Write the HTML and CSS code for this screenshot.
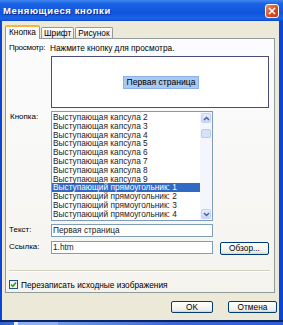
FILE: index.html
```html
<!doctype html>
<html lang="ru">
  <head>
    <meta charset="UTF-8" />
    <meta name="viewport" content="width=device-width, initial-scale=1.0" />
    <title>Меняющиеся кнопки</title>
    <link rel="stylesheet" href="styles.css">
  </head>
  <body>
    <div class="window">
      <div class="titlebar">
        <span class="title">Меняющиеся кнопки</span>
        <span class="close">
          <svg width="8" height="8" viewBox="0 0 8 8"><path d="M1 1L7 7M7 1L1 7" stroke="#fff" stroke-width="1.6" /></svg>
        </span>
      </div>

      <div class="client">
        <div class="tabs">
          <div class="tab active">Кнопка</div>
          <div class="tab">Шрифт</div>
          <div class="tab">Рисунок</div>
        </div>

        <div class="panel">
          <div class="row hint-row">
            <span class="label">Просмотр:</span>
            <span class="hint">Нажмите кнопку для просмотра.</span>
          </div>

          <div class="preview">
            <span class="preview-btn">Первая страница</span>
          </div>

          <div class="row list-row">
            <span class="label">Кнопка:</span>
            <div class="listbox">
              <ul class="items">
                <li>Выступающая капсула 2</li>
                <li>Выступающая капсула 3</li>
                <li>Выступающая капсула 4</li>
                <li>Выступающая капсула 5</li>
                <li>Выступающая капсула 6</li>
                <li>Выступающая капсула 7</li>
                <li>Выступающая капсула 8</li>
                <li>Выступающая капсула 9</li>
                <li class="selected">Выступающий прямоугольник: 1</li>
                <li>Выступающий прямоугольник: 2</li>
                <li>Выступающий прямоугольник: 3</li>
                <li>Выступающий прямоугольник: 4</li>
              </ul>
              <div class="scrollbar">
                <span class="sb-btn">
                  <svg width="7" height="5" viewBox="0 0 7 5"><path d="M1 4L3.5 1.5L6 4" fill="none" stroke="#4d6185" stroke-width="1.4" /></svg>
                </span>
                <span class="sb-thumb"></span>
                <span class="sb-track"></span>
                <span class="sb-btn">
                  <svg width="7" height="5" viewBox="0 0 7 5"><path d="M1 1L3.5 3.5L6 1" fill="none" stroke="#4d6185" stroke-width="1.4" /></svg>
                </span>
              </div>
            </div>
          </div>

          <div class="row field-row">
            <span class="label">Текст:</span>
            <div class="field">Первая страница</div>
          </div>

          <div class="row field-row link-row">
            <span class="label">Ссылка:</span>
            <div class="field">1.htm</div>
            <span class="xp-btn browse">Обзор...</span>
          </div>

          <div class="separator"></div>

          <div class="row check-row">
            <span class="checkbox">
              <svg width="7" height="7" viewBox="0 0 7 7"><path d="M1 3.5L2.8 5.3L6 1.5" fill="none" stroke="#21a121" stroke-width="1.5" /></svg>
            </span>
            <span>Перезаписать исходные изображения</span>
          </div>
        </div>

        <div class="actions">
          <span class="xp-btn ok">OK</span>
          <span class="xp-btn cancel">Отмена</span>
        </div>
      </div>

      <div class="taskbar">
        <span class="tb-mark"></span>
        <span class="tb-glow"></span>
      </div>
    </div>
  </body>
</html>
```

FILE: styles.css
```css
body {
  margin: 0;
  width: 283px;
  height: 325px;
  overflow: hidden;
  background: #0b3fc9;
  font-family: "Liberation Sans", Arial, sans-serif;
  font-size: 8.3px;
  color: #000;
}

.window {
  display: flex;
  flex-direction: column;
  height: 325px;
  background: #0a45d6;
}

.titlebar {
  height: 21px;
  flex: none;
  display: flex;
  align-items: center;
  justify-content: space-between;
  padding: 0 4px 0 3px;
  background: linear-gradient(#3f86f2 0%, #1a62e4 18%, #0f55dc 60%, #1b63e6 90%, #0a45d6 100%);
}

.title {
  color: #fff;
  font-weight: bold;
  font-size: 9.5px;
  letter-spacing: 0.6px;
  text-shadow: 1px 1px 0 #0a2a8a;
}

.close {
  width: 14px;
  height: 14px;
  box-sizing: border-box;
  border: 1px solid #fff;
  border-radius: 3px;
  background: linear-gradient(135deg, #f08a64, #d54b1e 60%, #c23c12);
  display: flex;
  align-items: center;
  justify-content: center;
}

.client {
  height: 299px;
  flex: none;
  margin: 0 4px 0 2px;
  background: #ece9d8;
}

.tabs {
  display: flex;
  align-items: flex-end;
  gap: 1px;
  height: 13px;
  margin: 4px 0 0 3px;
}

.tab {
  height: 11px;
  box-sizing: border-box;
  padding: 0 2px;
  border: 1px solid #919b9c;
  border-bottom: none;
  border-radius: 2px 2px 0 0;
  background: linear-gradient(#fff, #ecebe5);
  line-height: 10px;
  color: #000;
}

.tab.active {
  padding: 0 3px;
  border-top: 2px solid #f5b444;
  background: #fcfcfe;
  line-height: 11px;
  position: relative;
  z-index: 1;
  margin-bottom: -1px;
  height: 14px;
}

.panel {
  width: 270px;
  height: 255px;
  box-sizing: border-box;
  margin-left: 3px;
  padding: 4px 0 0 3px;
  border: 1px solid #919b9c;
  background: linear-gradient(#fcfcfe, #f4f3ee);
}

.row {
  display: flex;
}

.label {
  width: 42px;
  flex: none;
  font-size: 8px;
}

.hint-row {
  height: 10px;
  line-height: 10px;
}

.hint-row .label {
  letter-spacing: -0.3px;
}

.hint {
  margin-left: -1px;
}

.preview {
  width: 218px;
  height: 52px;
  box-sizing: border-box;
  margin: 3px 0 0 42px;
  border: 1px solid #4b4b7d;
  background: #fff;
  display: flex;
  align-items: center;
  justify-content: center;
}

.preview-btn {
  width: 76px;
  height: 13px;
  box-sizing: border-box;
  border: 1px solid #8db2e8;
  background: #a9c9f2;
  text-align: center;
  line-height: 11px;
  font-size: 8.6px;
  margin-left: 2px;
  white-space: nowrap;
}

.list-row {
  margin-top: 3px;
}

.list-row .label {
  padding-top: 1px;
  padding-left: 1px;
  width: 41px;
}

.listbox {
  width: 162px;
  height: 110px;
  box-sizing: border-box;
  border: 1px solid #7f9db9;
  background: #fff;
  display: flex;
}

.items {
  flex: 1;
  list-style: none;
  margin: 0;
  padding: 1px 0 0;
}

.items li {
  height: 8.8px;
  line-height: 8.8px;
  padding-left: 1px;
  white-space: nowrap;
  color: #222;
}

.items li.selected {
  background: #316ac5;
  color: #fff;
}

.scrollbar {
  width: 12px;
  flex: none;
  display: flex;
  flex-direction: column;
  background: #f4f6fb;
  padding: 1px 0;
  box-sizing: border-box;
}

.sb-btn {
  height: 10px;
  box-sizing: border-box;
  margin: 0 1px;
  border: 1px solid #c3d3fd;
  border-radius: 2px;
  background: linear-gradient(#e4ecfd, #c6d6fb);
  display: flex;
  align-items: center;
  justify-content: center;
}

.sb-thumb {
  height: 7px;
  margin: 6px 1px 0;
  border: 1px solid #b8cbf5;
  border-radius: 2px;
  background: #d6e2fb;
}

.sb-track {
  flex: 1;
}

.field-row {
  margin-top: 3px;
  align-items: flex-start;
}

.field-row .label {
  line-height: 13px;
  margin-top: -1px;
}

.field {
  width: 162px;
  height: 13px;
  box-sizing: border-box;
  border: 1px solid #7f9db9;
  background: #fff;
  padding-left: 1px;
  line-height: 11px;
  color: #222;
}

.link-row {
  margin-top: 4px;
}

.xp-btn {
  height: 12px;
  box-sizing: border-box;
  border: 1px solid #003c74;
  border-radius: 2px;
  background: linear-gradient(#fff, #f0f0ea 80%, #d8d0c4);
  text-align: center;
  line-height: 10px;
  color: #000;
}

.browse {
  width: 49px;
  height: 13px;
  margin: 1px 0 0 7px;
  line-height: 11px;
}

.separator {
  width: 261px;
  height: 1px;
  margin-top: 15px;
  background: #d0d0bf;
  border-bottom: 1px solid #fff;
}

.check-row {
  margin-top: 8px;
  align-items: center;
  gap: 3px;
  height: 9px;
}

.checkbox {
  width: 9px;
  height: 9px;
  box-sizing: border-box;
  border: 1px solid #1c5180;
  background: #f4f4f0;
  display: flex;
  align-items: center;
  justify-content: center;
}

.actions {
  display: flex;
  justify-content: flex-end;
  gap: 15px;
  margin-top: 8px;
  padding-right: 2px;
}

.ok {
  width: 42px;
}

.cancel {
  width: 49px;
}

.taskbar {
  flex: 1;
  border-top: 2px solid #0a246a;
  background: linear-gradient(90deg, #2b5fd4 0%, #6f9be8 20%, #3a6ad8 60%, #2b5fd4 100%);
  display: flex;
}

.tb-mark {
  width: 4px;
  margin-left: 14px;
  background: #e8eefc;
}

.tb-glow {
  width: 40px;
  background: #8db0f0;
}
```
